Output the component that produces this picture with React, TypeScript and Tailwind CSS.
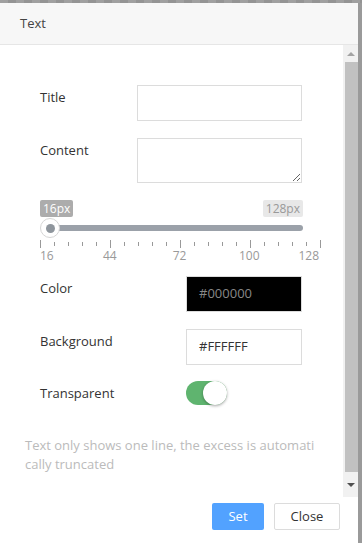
import React from "react"

const ticks = Array.from({ length: 21 }, (_, i) => i)
const marks = ["16", "44", "72", "100", "128"]

function Row({ label, children, top }: { label: string, children: React.ReactNode, top: string }) {
  return (
    <div className={`flex items-start pl-[40px] ${top}`}>
      <div className="mt-[2px] leading-[20px] text-[13px] text-[#333]">{label}</div>
      {children}
    </div>
  )
}

export default function App() {
  return (
    <div className="w-[362px] h-[543px] flex flex-col bg-white overflow-hidden" style={{ fontFamily: '"Open Sans", "Noto Sans", sans-serif' }}>
      <div className="h-[3px] bg-[repeating-linear-gradient(90deg,#a0a0a0_0px,#a0a0a0_8px,#949494_8px,#949494_16px)]" />
      <div className="flex flex-1 min-h-0">
        <div className="flex flex-col flex-1 min-w-0">
          <div className="h-[42px] bg-[#f7f7f7] border-b border-[#e6e6e6] flex items-center pl-[20px] text-[13px] text-[#444]">Text</div>

          <div className="flex flex-1 min-h-0">
            <div className="flex-1 flex flex-col">
              <Row label="Title" top="mt-[40px]">
                <input className="ml-auto mr-[41px] w-[165px] h-[36px] border border-[#dcdcdc] outline-none" />
              </Row>
              <Row label="Content" top="mt-[17px]">
                <textarea className="ml-auto mr-[41px] w-[165px] h-[45px] border border-[#dcdcdc] outline-none resize-y block" />
              </Row>

              <div className="pl-[40px] mt-[17px]">
                <div className="flex justify-between w-[263px] text-[12px] leading-[17px]">
                  <span className="bg-[#acacac] text-white px-[3px] rounded-[2px]">16px</span>
                  <span className="bg-[#e8e8e8] text-[#999] px-[3px] rounded-[2px]">128px</span>
                </div>
                <div className="flex items-center w-[263px] h-[22px]">
                  <div className="w-[20px] h-[20px] rounded-full bg-white border border-[#d6d6d6] flex items-center justify-center -mr-[10px] z-10">
                    <div className="w-[9px] h-[9px] rounded-full bg-[#8f969d]" />
                  </div>
                  <div className="flex-1 h-[6px] rounded-full bg-[#9ba1a9]" />
                </div>
                <div className="flex justify-between items-start w-[281px] mt-[1px] h-[9px]">
                  {ticks.map(i => (
                    <div key={i} className={i % 5 === 0 ? "w-px h-[8px] bg-[#999]" : "w-px h-[4px] mt-[2px] bg-[#999]"} />
                  ))}
                </div>
                <div className="flex justify-between w-[279px] text-[12px] leading-[14px] text-[#999]">
                  {marks.map((m, i) => (
                    <div key={m} className={`w-0 flex whitespace-nowrap ${i === 0 ? "justify-start" : i === 4 ? "justify-end" : "justify-center"}`}>{m}</div>
                  ))}
                </div>
              </div>

              <Row label="Color" top="mt-[13px]">
                <div className="ml-auto mr-[41px] w-[116px] h-[36px] bg-black border border-[#dcdcdc] flex items-center pl-[12px] text-[13px] text-[#888]">#000000</div>
              </Row>
              <Row label="Background" top="mt-[17px]">
                <div className="ml-auto mr-[41px] w-[116px] h-[36px] bg-white border border-[#dcdcdc] flex items-center pl-[12px] text-[13px] text-[#333]">#FFFFFF</div>
              </Row>
              <Row label="Transparent" top="mt-[16px]">
                <div className="ml-auto mr-[116px] w-[41px] h-[24px] rounded-full bg-[#5fb46f] flex items-center justify-end">
                  <div className="w-[24px] h-[24px] rounded-full bg-white shadow-[0_1px_3px_rgba(0,0,0,0.35)]" />
                </div>
              </Row>

              <div className="pl-[25px] mt-[31px] w-[318px] text-[13px] leading-[19px] text-[#bbb] break-all">
                Text only shows one line, the excess is automatically truncated
              </div>
            </div>

            <div className="w-[15px] bg-[#f1f1f1] flex flex-col">
              <div className="h-[17px] flex items-center justify-center">
                <div className="w-0 h-0 border-l-[4px] border-r-[4px] border-b-[4px] border-l-transparent border-r-transparent border-b-[#a3a3a3]" />
              </div>
              <div className="flex-1 ml-[2px] bg-[#c1c1c1]" />
              <div className="h-[25px] flex items-center justify-center">
                <div className="w-0 h-0 border-l-[4px] border-r-[4px] border-t-[4px] border-l-transparent border-r-transparent border-t-[#505050]" />
              </div>
            </div>
          </div>

          <div className="h-[46px] flex items-start justify-end pt-[6px] pr-[18px] gap-[10px]">
            <button className="w-[52px] h-[27px] bg-[#52a2ff] text-white text-[13px] rounded-[2px]">Set</button>
            <button className="w-[66px] h-[27px] bg-white border border-[#dcdcdc] text-[#333] text-[13px] rounded-[2px]">Close</button>
          </div>
        </div>
        <div className="w-[4px] bg-[#9a9a9a]" />
      </div>
    </div>
  )
}
